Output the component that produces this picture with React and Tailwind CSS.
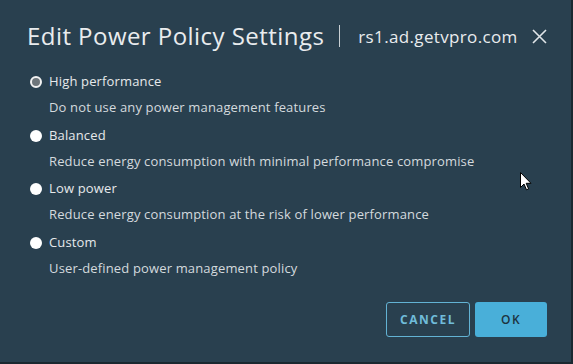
export default function App() {
  const options = [
    { label: 'High performance', desc: 'Do not use any power management features', selected: true },
    { label: 'Balanced', desc: 'Reduce energy consumption with minimal performance compromise' },
    { label: 'Low power', desc: 'Reduce energy consumption at the risk of lower performance' },
    { label: 'Custom', desc: 'User-defined power management policy' },
  ];

  return (
    <div className="w-[573px] h-[364px] bg-[#1a2830] font-['Open_Sans',sans-serif]">
      <div className="relative w-[571px] h-[362px] bg-[#29404f] flex flex-col">
        {/* Header */}
        <div className="flex items-center pl-[27px] pr-[24px] pt-[16px] h-[56px]">
          <h1 className="text-[24px] text-[#e9ecee] leading-none tracking-[0.45px]">Edit Power Policy Settings</h1>
          <div className="w-px h-[22px] bg-[#c9d0d4] ml-[15px] mr-[18px]" />
          <span className="text-[17px] text-[#e9ecee] leading-none tracking-[0.35px]">rs1.ad.getvpro.com</span>
          <svg className="ml-auto" width="15" height="15" viewBox="0 0 15 15">
            <path d="M1 1 L14 14 M14 1 L1 14" stroke="#e0e5e8" strokeWidth="1.6" />
          </svg>
        </div>

        {/* Options */}
        <div className="flex flex-col pl-[30px] pt-[17px]">
          {options.map((o) => (
            <div key={o.label} className="h-[53.5px]">
              <div className="flex items-center h-[18px]">
                {o.selected ? (
                  <span className="w-[12px] h-[12px] rounded-full bg-[#6e767b] border-[2px] border-[#f2f2f2]" />
                ) : (
                  <span className="w-[12px] h-[12px] rounded-full bg-white" />
                )}
                <span className="ml-[7px] text-[13px] text-[#e6e9eb] tracking-[0.15px]">{o.label}</span>
              </div>
              <div className="pl-[19px] mt-[7px] text-[13px] leading-[18px] text-[#d4dade] tracking-[0.15px]">{o.desc}</div>
            </div>
          ))}
        </div>

        {/* Footer */}
        <div className="mt-auto flex justify-end gap-[5px] pr-[24px] pb-[25px]">
          <button className="w-[84px] h-[35px] rounded-[3px] border border-[#63b3d4] text-[#70bcda] text-[12px] font-bold tracking-[1.5px]">
            CANCEL
          </button>
          <button className="w-[72px] h-[35px] rounded-[3px] bg-[#49afd9] text-[#1d3340] text-[12px] font-semibold tracking-[1.5px]">
            OK
          </button>
        </div>

        {/* Mouse pointer */}
        <svg className="absolute left-[520px] top-[172px]" width="12" height="19" viewBox="0 0 12 19">
          <path d="M0.5 0.5 L0.5 15.5 L4 12 L6.5 17.8 L8.6 16.9 L6.2 11.3 L11 11.3 Z" fill="#ffffff" stroke="#000000" strokeWidth="1" />
        </svg>
      </div>
    </div>
  );
}
